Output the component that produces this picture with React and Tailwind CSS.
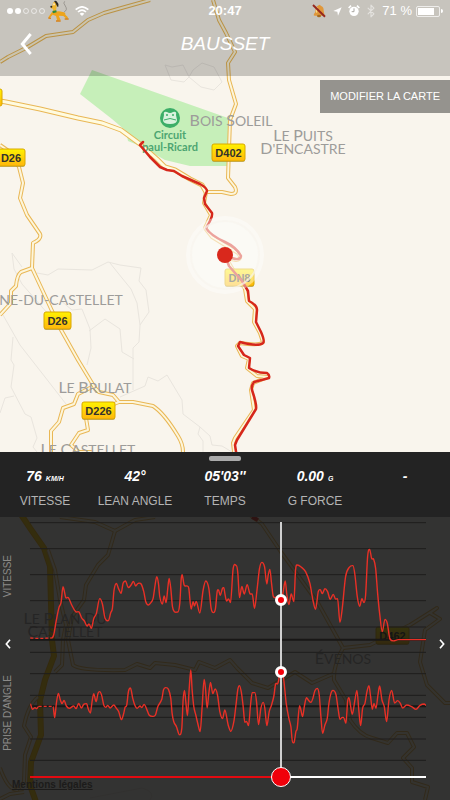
import { useState } from 'react';
import { Bluetooth } from 'lucide-react';

const START = 91;
const SPAN = 1187;

const parse = (text) =>
  text.trim().split(/\s+/).map((pair) => pair.split(',').map(Number));

const SPEED = parse(`
  92,354 105,355 130,355 155,354 162,345 170,300 178,262 184,248 190,200 198,232 206,233 216,255
  228,275 238,276 246,294 254,303 262,318 268,312 275,325 282,296 290,280 300,236 308,252 316,295
  326,302 333,278 338,265 343,210 350,190 356,205 364,220 370,190 377,183 386,203 394,195 401,184
  408,198 415,190 424,192 432,215 438,245 446,255 454,247 460,235 466,195 471,170 476,190 480,230
  488,252 493,228 499,248 504,205 508,175 513,205 518,260 524,275 534,276 540,250 544,180 547,164
  553,195 562,198 567,205 574,267 580,245 584,258 589,244 600,279 610,210 618,183 627,205 634,265
  641,278 647,265 652,215 656,210 661,226 668,205 672,203 675,220 680,243 686,237 692,248 700,145
  710,137 714,160 719,233 726,199 733,222 742,194 751,222 757,222 764,265 772,205 779,145 786,127
  794,140 801,192 805,165 810,148 815,190 820,228 830,232 843,241 850,215 856,183 861,225 867,254
  874,222 882,245 887,150 892,135 905,142 917,155 930,190 939,240 947,268 955,215 961,209 967,221
  975,206 983,215 991,238 1000,223 1007,237 1013,236 1020,307 1027,265 1037,170 1048,142 1059,137
  1065,165 1072,230 1079,259 1086,236 1092,248 1097,225 1103,110 1109,88 1115,115 1121,118 1127,145
  1133,220 1139,280 1147,335 1155,298 1162,310 1170,357 1195,359 1278,359
`);

const LEAN = parse(`
  92,162 98,178 106,173 111,176 117,169 125,169 160,169 165,203 170,160 176,130 182,150 187,161
  193,151 200,168 209,175 222,168 229,176 237,160 245,174 252,163 261,161 265,175 272,189 277,155
  282,131 289,155 295,130 300,125 306,137 312,165 318,172 324,166 331,174 342,165 350,175 357,185
  365,209 372,190 376,172 381,165 386,125 392,114 399,145 405,165 412,175 421,168 426,173 433,163
  441,178 448,195 458,199 467,195 474,170 486,148 491,120 497,113 506,118 513,145 517,190 522,215
  530,230 539,254 546,235 550,150 554,121 558,155 563,197 568,120 573,60 577,120 582,170 588,195
  595,225 601,245 607,170 613,88 617,115 622,174 627,130 632,97 639,131 646,117 653,135 660,185
  668,206 675,180 685,225 693,244 702,215 709,160 714,118 719,107 725,130 730,170 735,217 740,214
  746,227 752,165 757,128 765,128 770,155 776,224 783,175 790,157 795,175 801,227 808,185 815,165
  822,138 827,103 834,100 843,62 851,85 859,160 867,205 873,230 878,277 883,276 888,245 892,235
  899,167 903,180 908,200 914,165 920,143 925,150 933,157 939,145 945,122 952,115 958,135 963,200
  968,250 975,225 982,205 987,160 993,130 999,121 1008,133 1015,180 1020,208 1027,202 1031,202
  1038,220 1043,155 1047,143 1057,193 1065,150 1071,121 1077,185 1082,227 1088,175 1095,160
  1101,125 1107,107 1112,140 1117,178 1122,160 1128,175 1134,135 1139,108 1146,150 1153,170
  1160,215 1167,150 1175,121 1184,159 1193,152 1201,160 1208,174 1220,165 1235,170 1248,178
  1260,166 1273,162 1278,166
`);

// Cubic curve through every sample, flat at each peak and dip
function curve(points) {
  const slope = (i) => {
    const a = points[i - 1];
    const b = points[i];
    const c = points[i + 1];
    if (!a || !c || (b[1] - a[1]) * (c[1] - b[1]) <= 0) return 0;
    return (c[1] - a[1]) / (c[0] - a[0]);
  };
  return points
    .map(([x, y], i) => {
      if (i === 0) return `M${x} ${y}`;
      const [px, py] = points[i - 1];
      const dx = (x - px) / 3;
      return `C${px + dx} ${py + slope(i - 1) * dx} ${x - dx} ${y - slope(i) * dx} ${x} ${y}`;
    })
    .join('');
}

function valueAt(points, x) {
  const i = points.findIndex((p) => p[0] >= x);
  if (i <= 0) return points[i === 0 ? 0 : points.length - 1][1];
  const [x0, y0] = points[i - 1];
  const [x1, y1] = points[i];
  return y0 + ((x - x0) / (x1 - x0)) * (y1 - y0);
}

const STATS = [
  { value: '76', unit: 'KM/H', label: 'VITESSE' },
  { value: '42°', label: 'LEAN ANGLE' },
  { value: "05'03''", label: 'TEMPS' },
  { value: '0.00', unit: 'G', label: 'G FORCE' },
  { value: '-', label: '' },
];

const ROADS = [
  'M0 62L8 57L26 48L46 36L73 32L88 20L104 13L125 7L150 0',
  'M213 0L219 20L226 33L235 52L228 63L229 80L236 104L230 120L228 178L235 187Q238 194 231 194L222 192L206 192',
  'M0 145L10 152L19 167L23 183L20 198L27 215L40 234Q42 239 33 243L32 268L60 328L78 360L95 388L99 392L113 395L119 402L133 402L153 406Q164 413 178 436Q183 444 183 452V460',
  'M32 268L21 272Q17 275 16 286L11 291L11 303L0 315',
  'M92 387L78 394L74 404L63 408L59 422L51 431L51 458',
  'M119 402L104 408',
  'M86 418L88 430L79 433L71 445L79 452L92 452',
  'M206 192L204 203L211 215L205 228L212 237L225 245L238 253Q243 259 236 260L226 258L236 275L245 289L247 301L255 309L254 322L260 333L263 342Q260 346 240 343L237 346L242 356L249 359L247 368L257 376L268 377L253 383L251 390L254 410L235 438L233 443L235 460L250 515L262 524L281 552L318 603L343 648',
  'M60 517L95 522L115 531L135 520L155 517',
  'M115 531L108 555L98 565L86 585L84 600L72 617L68 640L73 665Q80 671 125 670L137 664L150 668L155 663L175 665L195 670L199 662L215 668L230 660L237 668L252 683L268 688L295 672L312 683L335 673',
  'M48 550L55 570L60 600L66 625L63 640L62 665L55 672',
  'M343 648L370 645L410 625L437 608L430 613L440 619L425 630L420 662L427 685L445 703H452',
  'M343 648Q333 666 334 680L346 700L350 720Q360 735 372 738L388 743L397 733L407 733L414 747L403 758L412 768V782L428 787L425 800',
  'M38 697Q28 705 24 726L31 737L25 755L24 782L17 790Q8 790 0 768',
  'M24 792L10 794L0 799',
];

const MAIN_ROAD =
  'M0 101L6 102L40 109L78 118L102 123L121 130L140 144L157 159L165 167L175 170L190 179L202 185L206 192';

const HIGHWAY = 'M18 510L30 528L44 548L50 566L52 640L54 656L45 680L40 700L41 735L31 762L30 785L36 802';

const TRAILS = [
  'M165 65L171 80L184 82L189 77L183 65L172 67L165 65M189 77L193 70L202 63L214 67L222 82L214 90L201 87L189 77',
  'M22 267L12 253L14 269L22 284L62 330',
  'M37 273L48 275L58 269L92 270L108 262L120 265L141 268L139 281L146 290L149 312L140 325L139 342L133 348V390',
  'M110 263L118 273L131 289L137 303L140 325',
  'M60 300L72 310L82 309L90 329L91 348L87 365',
  'M89 331L105 319L120 329L122 352L134 359',
  'M3 315L20 345L45 377L66 404',
  'M13 337L11 360L14 365L11 387L25 414L31 417L37 438L33 447L37 452',
  'M14 396L5 398L0 413',
  'M120 397L145 386L148 377L158 381L167 375L182 400L183 414L200 427L210 436L212 445L222 446L232 452',
  'M200 427L198 434L203 441V452',
  'M90 798L142 788Q156 792 150 800',
];

const RIDE =
  'M143 142L140 145L150 157L160 167L167 170L174 171L182 176L200 184Q207 188 207 191L204 198L205 204L212 213Q213 217 206 228Q210 235 225 242Q236 247 241 256Q240 261 232 258L225 255L229 266L242 281L248 291L249 301Q257 305 257 310L256 322L261 332Q265 341 263 343Q258 347 240 342L238 346L244 355L250 358L249 368Q257 373 267 373Q270 375 269 378L254 382Q251 386 252 390Q257 405 256 409L237 440L235 445L237 458';

const SHIELDS = [
  { name: 'D26', x: -3, y: 149, w: 28 },
  { name: 'D402', x: 212, y: 144, w: 33 },
  { name: 'DN8', x: 225, y: 269, w: 29 },
  { name: 'D26', x: 44, y: 312, w: 27 },
  { name: 'D226', x: 82, y: 402, w: 33 },
  { name: 'D462', x: 376, y: 627, w: 33 },
];

const PLACES = [
  { words: ['Bois', 'Soleil'], x: 231, y: 126 },
  { words: ['Le', 'Puits'], x: 303, y: 141 },
  { words: ["D'encastre"], x: 303, y: 154 },
  { words: ['ne-du-castellet'], x: 61, y: 305, flat: true },
  { words: ['Le', 'Brulat'], x: 95, y: 393 },
  { words: ['Le', 'Castellet'], x: 88, y: 455 },
  { words: ['Le', 'Plan', 'Du'], x: 65, y: 624 },
  { words: ['Castellet'], x: 65, y: 637 },
  { words: ['Évenos'], x: 343, y: 664 },
];

function Place({ words, x, y, flat }) {
  return (
    <text x={x} y={y} textAnchor="middle" className="fill-[#9d9c9a] font-['Lato',sans-serif] text-[14px]">
      {words.map((word, i) => (
        <tspan key={i}>
          {i > 0 && ' '}
          <tspan className={flat ? 'text-[14px]' : 'text-[16px]'}>{word[0].toUpperCase()}</tspan>
          {word.slice(1).toUpperCase()}
        </tspan>
      ))}
    </text>
  );
}

function MapCanvas() {
  return (
    <svg
      viewBox="0 0 450 800"
      preserveAspectRatio="xMidYMid slice"
      className="absolute inset-0 h-full w-full"
      aria-label="Carte du parcours"
    >
      <defs>
        <linearGradient id="shield" x1="0" y1="0" x2="0" y2="1">
          <stop offset="0" stopColor="#fff200" />
          <stop offset="1" stopColor="#ffb60d" />
        </linearGradient>
      </defs>
      <path d="M92 70L80 94L112 119L126 131L128 141L140 146L165 160L190 166H228V118Z" fill="#c6efb9" />
      <g fill="none" stroke="#e9e5de" strokeWidth="1">
        {TRAILS.map((d) => <path key={d} d={d} />)}
      </g>
      <path d={HIGHWAY} fill="none" stroke="#f5b400" strokeWidth="6" />
      <path d={HIGHWAY} fill="none" stroke="#ffd000" strokeWidth="4" />
      <g fill="none" strokeLinejoin="round">
        <g stroke="#e9b755" strokeWidth="4">
          {ROADS.map((d) => <path key={d} d={d} />)}
        </g>
        <path d={MAIN_ROAD} stroke="#e9b755" strokeWidth="5" />
        <g stroke="#fdf6dc" strokeWidth="2">
          {ROADS.map((d) => <path key={d} d={d} />)}
        </g>
        <path d={MAIN_ROAD} stroke="#fffbe0" strokeWidth="3" />
      </g>

      {PLACES.map((place) => <Place key={place.words.join() + place.y} {...place} />)}

      <rect x="-4" y="89" width="6" height="17" rx="2" fill="url(#shield)" stroke="#d9a800" />
      <circle cx="170" cy="118" r="10" fill="#3cae68" />
      <path d="M164 115Q163 111 167 112Q170 114 173 112Q177 111 176 115L177 120Q177 124 170 124Q163 124 163 120Z" fill="#d9f2dd" />
      <circle cx="167" cy="115" r="1" fill="#3cae68" />
      <circle cx="173" cy="115" r="1" fill="#3cae68" />
      <path d="M164 120Q170 117 176 120" fill="none" stroke="#3cae68" strokeWidth="1" />
      <g textAnchor="middle" className="fill-[#4da571] font-['Lato',sans-serif] text-[11px] font-bold">
        <text x="170" y="139">Circuit</text>
        <text x="170" y="151">paul-Ricard</text>
      </g>

      {SHIELDS.map(({ name, x, y, w }) => (
        <g key={name + y}>
          <rect x={x} y={y + 1} width={w} height="17" rx="2" fill="#8d7d4a" fillOpacity="0.6" />
          <rect x={x} y={y} width={w} height="17" rx="2" fill="url(#shield)" stroke="#d9a800" strokeWidth="1" />
          <text x={x + w / 2} y={y + 13} textAnchor="middle" className="fill-[#33322b] text-[11px] font-bold">{name}</text>
        </g>
      ))}

      <path d={RIDE} fill="none" stroke="#d6271b" strokeWidth="2.5" strokeLinejoin="round" strokeLinecap="round" />
      <path d="M252 517L258 520" stroke="#d6271b" strokeWidth="4" />
      <circle cx="225" cy="255" r="39" fill="#fff" fillOpacity="0.4" />
      <circle cx="225" cy="255" r="34" fill="#fdfcf8" fillOpacity="0.3" stroke="#f8f5ee" strokeOpacity="0.7" strokeWidth="2" />
      <circle cx="225" cy="255" r="8" fill="#d9281c" />
    </svg>
  );
}

function Pluto() {
  return (
    <svg viewBox="0 0 66 66" className="h-[22px] w-[22px]" aria-hidden="true">
      <path d="M48 36Q60 30 52 18Q44 8 50 4" fill="none" stroke="#85817a" strokeWidth="2" />
      <path d="M18 36Q32 32 44 36Q53 36 52 44L60 52L57 58L46 48L32 47L38 60L28 63L24 48L14 44L5 55L1 52L12 36Z" fill="#eda41c" />
      <path d="M13 18Q14 4 22 5Q28 8 26 18L24 34L15 34L15 26Q8 27 8 22Q10 19 13 18Z" fill="#f0b52c" />
      <path d="M18 3Q24 0 27 5Q33 10 31 20Q28 22 26 16L22 8Z" fill="#2c2822" />
      <path d="M13 33L25 31L26 37L15 40Z" fill="#2d8a3c" />
      <circle cx="10" cy="20" r="3" fill="#2c2822" />
      <path d="M17 9Q21 9 20 16H16Z" fill="#fff" />
      <path d="M1 54L9 55M24 63H38M50 57H62" stroke="#d8821a" strokeWidth="4" />
    </svg>
  );
}

function MutedBell() {
  return (
    <svg viewBox="0 0 42 42" className="h-3.5 w-3.5" aria-hidden="true">
      <path d="M20 4Q24 0 26 5Q36 8 35 20L37 31Q39 35 34 35H8Q3 35 6 30L10 24Q9 8 20 4Z" fill="#e0973a" />
      <path d="M16 10Q12 16 14 26" fill="none" stroke="#fbdc83" strokeWidth="4" />
      <ellipse cx="21" cy="36" rx="6" ry="4" fill="#a8691d" />
      <path d="M3 3L39 38" stroke="#94271f" strokeWidth="6" />
    </svg>
  );
}

function StatusBar() {
  return (
    <div className="flex h-[22px] items-center px-[7px] text-[13px]">
      <div className="flex flex-1 items-center">
        <div className="flex gap-[2px]">
          {[1, 2, 3, 4, 5].map((n) => (
            <span
              key={n}
              className={n < 3 ? 'h-1.5 w-1.5 rounded-full bg-white' : 'h-1.5 w-1.5 rounded-full border border-white/60'}
            />
          ))}
        </div>
        <span className="ml-[3px]"><Pluto /></span>
        <svg viewBox="0 0 42 30" className="ml-[5px] h-[10px] w-[14px]" aria-hidden="true">
          <path d="M2 11Q21 -6 40 11M9 18Q21 7 33 18" fill="none" stroke="#fff" strokeWidth="5" />
          <path d="M14 23Q21 17 28 23L21 30Z" fill="#fff" />
        </svg>
      </div>
      <time className="font-bold">20:47</time>
      <div className="flex flex-1 items-center justify-end">
        <MutedBell />
        <svg viewBox="0 0 27 27" className="ml-[7px] h-[9px] w-[9px]" aria-hidden="true">
          <path d="M26 1L15 26L13 14L1 12Z" fill="#fff" />
        </svg>
        <svg viewBox="0 0 36 36" className="ml-[6px] h-3 w-3" aria-hidden="true">
          <circle cx="18" cy="19" r="14" fill="#fff" />
          <path d="M2 9L9 2M34 9L27 2" stroke="#fff" strokeWidth="5" />
          <path d="M18 10V20H11" fill="none" stroke="#a9a6a1" strokeWidth="3" />
        </svg>
        <Bluetooth strokeWidth={2} className="ml-1 h-[14px] w-[14px] text-white/50" />
        <span className="ml-1">71 %</span>
        <span className="ml-1 flex h-[11px] w-6 rounded-xs border border-white/70 p-px">
          <span className="w-4 bg-white" />
        </span>
        <span className="ml-px h-1 w-0.5 rounded-r-xs bg-white" />
      </div>
    </div>
  );
}

function Chart({ points, idle, box, lines, axis, cursor, className, label }) {
  const [top, height] = box;
  const markerTop = ((valueAt(points, START + cursor * SPAN) - top) / height) * 100;
  const isIdle = ([x]) => x >= idle[0] && x <= idle[1];
  const first = points.findIndex(isIdle);
  const last = points.findLastIndex(isIdle);

  return (
    <div className={`relative ${className}`}>
      <svg
        viewBox={`${START} ${top} ${SPAN} ${height}`}
        preserveAspectRatio="none"
        className="block h-full w-full overflow-visible"
        role="img"
        aria-label={label}
      >
        {lines.map((y) => (
          <path
            key={y}
            d={`M${START} ${y}H${START + SPAN}`}
            stroke={y === axis ? '#181716' : '#1e1d1c'}
            strokeWidth={y === axis ? 2 : 1}
            vectorEffect="non-scaling-stroke"
          />
        ))}
        <g fill="none" stroke="#e93026" strokeWidth="1.4">
          {first > 0 && <path d={curve(points.slice(0, first + 1))} vectorEffect="non-scaling-stroke" />}
          <path d={curve(points.slice(first, last + 1))} strokeDasharray="3 2" vectorEffect="non-scaling-stroke" />
          <path d={curve(points.slice(last))} vectorEffect="non-scaling-stroke" />
        </g>
      </svg>
      <span
        className="absolute z-10 h-3 w-3 -translate-x-1/2 -translate-y-1/2 rounded-full border-[3px] border-white bg-[#f5000a]"
        style={{ left: `${cursor * 100}%`, top: `${markerTop}%` }}
      />
    </div>
  );
}

function Telemetry() {
  const [position, setPosition] = useState(633);
  const cursor = position / 1000;

  return (
    <section className="relative flex bg-[#111111]/85 pb-[13px]">
      <div className="flex w-[30px] shrink-0 flex-col items-start pt-[38px] text-[10px] text-[#8b8a88]">
        <span className="rotate-180 leading-4 [writing-mode:vertical-rl]">VITESSE</span>
        <button type="button" aria-label="Précédent" className="mt-[42px] ml-[5px] flex text-white">
          <svg viewBox="0 0 18 30" className="h-[10px] w-[6px]" aria-hidden="true">
            <path d="M15 2L4 15L15 28" fill="none" stroke="currentColor" strokeWidth="5" />
          </svg>
        </button>
        <span className="mt-[26px] rotate-180 leading-4 [writing-mode:vertical-rl]">PRISE D'ANGLE</span>
      </div>

      <div className="relative min-w-0 flex-1 pt-[5px]">
        <Chart
          points={SPEED}
          idle={[92, 155]}
          box={[6, 390]}
          lines={[8, 86, 164, 242, 321, 359]}
          axis={359}
          cursor={cursor}
          className="h-[130px]"
          label="Vitesse"
        />
        <Chart
          points={LEAN}
          idle={[117, 160]}
          box={[6, 324]}
          lines={[7, 71, 136, 169, 202, 267, 331]}
          axis={169}
          cursor={cursor}
          className="h-[108px]"
          label="Prise d'angle"
        />
        <div
          className="absolute top-[5px] bottom-[10px] w-0.5 -translate-x-1/2 bg-[#d0d0d0]"
          style={{ left: `${cursor * 100}%` }}
        />
        <div className="relative mt-[7px] flex h-5 items-center">
          <div className="h-0.5 w-full bg-white">
            <div className="h-full bg-[#e30a10]" style={{ width: `${cursor * 100}%` }} />
          </div>
          <input
            type="range"
            min="0"
            max="1000"
            value={position}
            onChange={(e) => setPosition(Number(e.target.value))}
            aria-label="Position sur le parcours"
            className="absolute inset-y-0 -left-2.5 w-[calc(100%+20px)] cursor-pointer appearance-none bg-transparent [&::-webkit-slider-thumb]:h-5 [&::-webkit-slider-thumb]:w-5 [&::-webkit-slider-thumb]:appearance-none [&::-webkit-slider-thumb]:rounded-full [&::-webkit-slider-thumb]:border [&::-webkit-slider-thumb]:border-solid [&::-webkit-slider-thumb]:border-white [&::-webkit-slider-thumb]:bg-[#f0000a]"
          />
        </div>
      </div>

      <div className="flex w-6 shrink-0 flex-col items-end pt-[122px] pr-[5px]">
        <button type="button" aria-label="Suivant" className="flex text-white">
          <svg viewBox="0 0 18 30" className="h-[10px] w-[6px]" aria-hidden="true">
            <path d="M3 2L14 15L3 28" fill="none" stroke="currentColor" strokeWidth="5" />
          </svg>
        </button>
      </div>

      <a href="#mentions" className="absolute bottom-[9px] left-3 text-[10px] leading-3 font-bold text-[#1c1b1a] underline">
        Mentions légales
      </a>
    </section>
  );
}

export default function App() {
  return (
    <main className="relative flex min-h-screen w-full flex-col overflow-hidden bg-[#f9f5ed] font-['Liberation_Sans',Arial,sans-serif]">
      <MapCanvas />

      {/* Header */}
      <header className="relative bg-black/20 pb-2.5 text-white">
        <StatusBar />
        <div className="flex h-11 items-center px-5">
          <button type="button" aria-label="Retour" className="w-8">
            <svg viewBox="0 0 36 66" className="h-[22px] w-3" aria-hidden="true">
              <path d="M32 3L7 33L32 63" fill="none" stroke="#fff" strokeWidth="9" />
            </svg>
          </button>
          <h1 className="flex-1 text-center text-[19px] italic">BAUSSET</h1>
          <span className="w-8" />
        </div>
      </header>

      <button type="button" className="relative mt-1 h-[33px] self-end bg-black/40 px-2.5 text-[11px] text-white">
        MODIFIER LA CARTE
      </button>

      {/* Ride panel */}
      <div className="relative mt-auto">
        <div className="bg-[#232323] pt-1 pb-1.5">
          <div className="mx-auto h-[5px] w-8 rounded-xs bg-[#aaaaaa]" />
          <dl className="mt-1.5 grid grid-cols-5 text-center">
            {STATS.map(({ value, unit, label }) => (
              <div key={value} className="flex flex-col-reverse justify-end">
                <dt className="mt-1.5 h-5 text-[12px] leading-5 text-[#b4b4b4]">{label}</dt>
                <dd className="h-[18px] text-[14px] leading-[18px] font-bold text-white italic">
                  {value}
                  {unit && <span className="ml-1 text-[7px] leading-none">{unit}</span>}
                </dd>
              </div>
            ))}
          </dl>
        </div>
        <Telemetry />
      </div>
    </main>
  );
}
